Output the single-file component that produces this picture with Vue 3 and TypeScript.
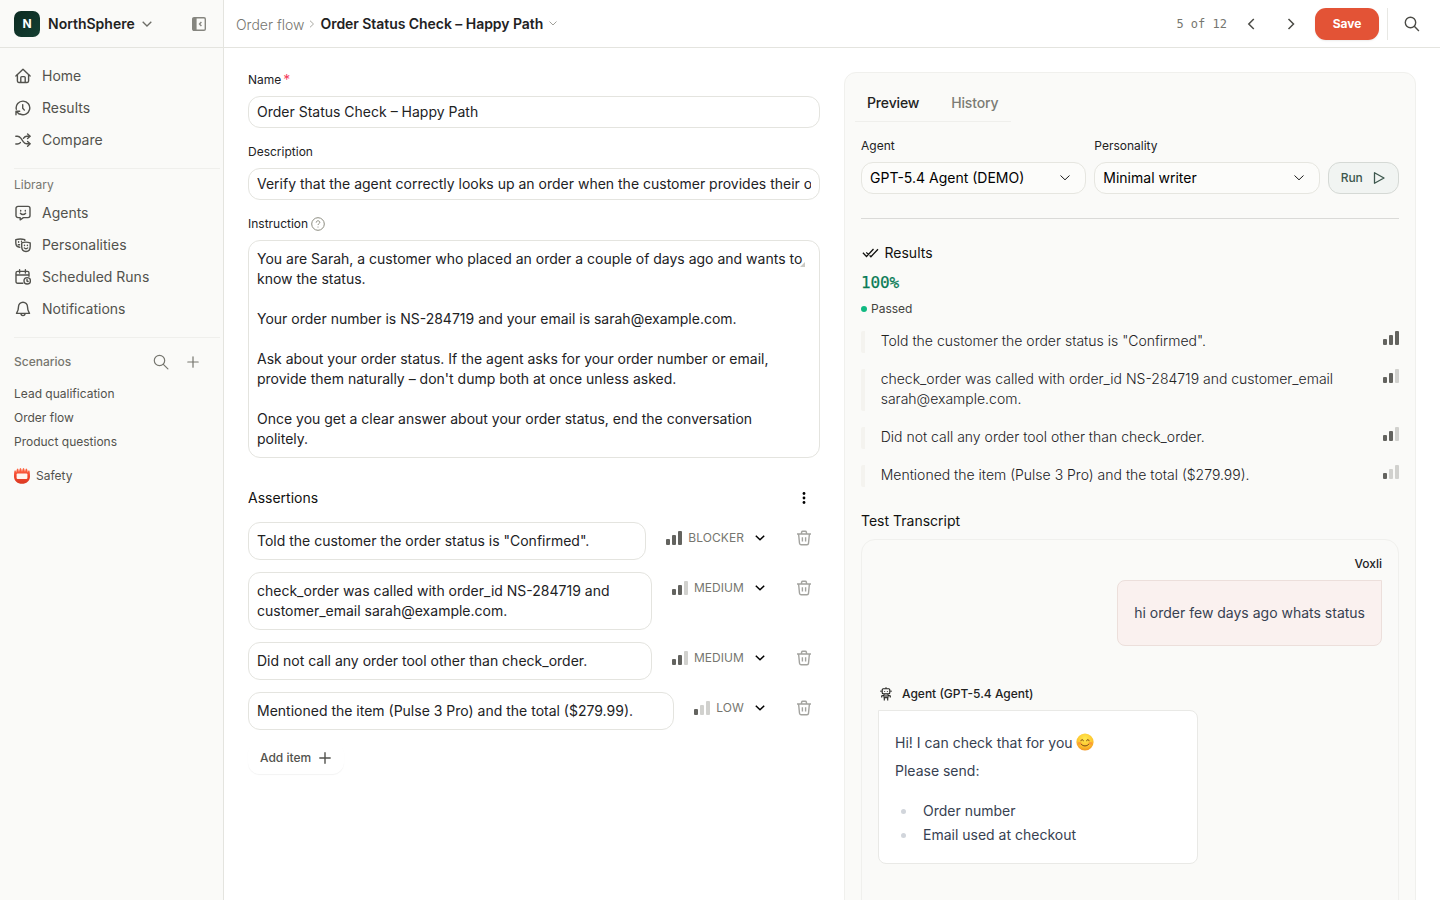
<script setup lang="ts">
import { ref } from 'vue'

interface NavItem { label: string; icon: string }
interface Assertion { text: string; level: number; tag: string }

// Icon bodies share a 16 x 16 viewBox
const icons: Record<string, string> = {
  home: '<path d="M.9 8 8 1.3 15.1 8"/><path d="M2.4 6.8v6.3c0 .9.6 1.4 1.4 1.4h8.4c.8 0 1.4-.5 1.4-1.4V6.8"/><path d="M5.8 14.4V9.6c0-.7.4-1 1-1h2.4c.6 0 1 .3 1 1v4.8"/>',
  history: '<path d="M1.300 9.200A6.800 6.800 0 1 1 5 14"/><path d="M1 14.700V11.200h3.700M1.300 11.500l3 2.600"/><path d="M7.700 4.600v3.600l1.700 1.900"/>',
  shuffle: '<path d="M.8 4.200h1.600c1.500 0 2.500.8 3.400 2l2.600 3.600c.9 1.200 1.800 2 3.300 2h3"/><path d="M.8 12h1.600c1.300 0 2.200-.5 3-1.400M8.400 6.300c.9-1.200 1.800-2.100 3.300-2.100h3"/><path d="m12.600 1.900 2.500 2.300-2.500 2.300M12.600 9.500l2.500 2.300-2.500 2.400"/>',
  agent: '<path d="M3 1.400h10a2 2 0 0 1 2 2v7.200a2 2 0 0 1-2 2H8.400L5.200 14.800v-2.200H3a2 2 0 0 1-2-2V3.400a2 2 0 0 1 2-2Z"/><path d="M5.700 5.400v.6M10.300 5.400v.6M5.400 8.200c1.400 1.700 3.800 1.700 5.200 0"/>',
  masks: '<path d="M4.800 10.200C2.300 10 .8 8.500.8 5.800V2.700c3-1 6-1 9 0v.9"/><path d="M6.700 5.800c2.800-.9 5.700-.9 8.500 0v3.800c0 3-1.500 4.900-4.200 4.900s-4.300-1.900-4.300-4.900Z"/><path d="M3.600 4.700v.5M6.500 4.300v.3M3.300 7.800h1.300M9.500 8.100v.4M12.400 8.100v.4M9.300 10.900c1 1.100 2.400 1.100 3.400 0"/>',
  calendar: '<path d="M7.800 14.200H2.600c-1 0-1.600-.6-1.600-1.600V4c0-1 .6-1.600 1.600-1.600h9.800c1 0 1.600.6 1.600 1.600v3.200M1 6h13M4.600.8v3.300M10.400.8v3.300"/><circle cx="12.200" cy="11.800" r="3.200"/><path d="M12 10.200v1.800l1.100.5"/>',
  bell: '<path d="M8 1.200a4.500 4.500 0 0 0-4.500 4.500c0 3.700-1 5-2 6.700h13c-1-1.700-2-3-2-6.700A4.500 4.500 0 0 0 8 1.200Z"/><path d="M6 12.600a2 2 0 0 0 4 0"/>',
  search: '<circle cx="6.500" cy="6.500" r="5.200"/><path d="m10.300 10.300 4.600 4.600"/>',
  plus: '<path d="M8 2.800v10.400M2.800 8h10.400"/>',
  right: '<path d="m5.500 3 5 5-5 5"/>',
  left: '<path d="m10.800 3-5 5 5 5"/>',
  trash: '<path d="M1 4h14M5.300 4l.4-2c.1-.5.400-.8 1-.8h2.600c.6 0 .9.3 1 .8l.4 2M2.600 4l.9 9.300c.1.900.6 1.400 1.500 1.400h6c.9 0 1.400-.5 1.500-1.400l.9-9.300M6.400 7.200v4.300M9.600 7.200v4.300"/>',
}

const mainNav: NavItem[] = [
  { label: 'Home', icon: 'home' },
  { label: 'Results', icon: 'history' },
  { label: 'Compare', icon: 'shuffle' },
]
const library: NavItem[] = [
  { label: 'Agents', icon: 'agent' },
  { label: 'Personalities', icon: 'masks' },
  { label: 'Scheduled Runs', icon: 'calendar' },
  { label: 'Notifications', icon: 'bell' },
]
const scenarios = ['Lead qualification', 'Order flow', 'Product questions']

const title = ref('Order Status Check – Happy Path')
const description = ref('Verify that the agent correctly looks up an order when the customer provides their order')
const instruction = ref(`You are Sarah, a customer who placed an order a couple of days ago and wants to know the status.

Your order number is NS-284719 and your email is sarah@example.com.

Ask about your order status. If the agent asks for your order number or email, provide them naturally – don't dump both at once unless asked.

Once you get a clear answer about your order status, end the conversation politely.`)

const assertions: Assertion[] = [
  { text: 'Told the customer the order status is "Confirmed".', level: 3, tag: 'BLOCKER' },
  { text: 'check_order was called with order_id NS-284719 and customer_email sarah@example.com.', level: 2, tag: 'MEDIUM' },
  { text: 'Did not call any order tool other than check_order.', level: 2, tag: 'MEDIUM' },
  { text: 'Mentioned the item (Pulse 3 Pro) and the total ($279.99).', level: 1, tag: 'LOW' },
]
</script>

<template>
  <div class="app">
    <aside class="sidebar">
      <div class="brand">
        <span class="logo">N</span>
        <span class="brand-name">NorthSphere</span>
        <svg class="brand-chevron" viewBox="0 0 10 6"><path d="m.7.7 4.300 4.300L9.300.7" /></svg>
        <svg class="collapse" viewBox="0 0 14 14">
          <rect x=".7" y=".7" width="12.600" height="12.600" rx="1.300" />
          <path class="fill" d="M1 1h3.600v12H1z" /><path d="M9.400 5 7.500 7l1.900 2" />
        </svg>
      </div>
      <nav class="nav first">
        <a v-for="n in mainNav" :key="n.label" class="nav-item">
          <svg class="icon" viewBox="0 0 16 16" v-html="icons[n.icon]" />{{ n.label }}
        </a>
      </nav>
      <hr class="rule" />
      <div class="section-label">Library</div>
      <nav class="nav">
        <a v-for="n in library" :key="n.label" class="nav-item">
          <svg class="icon" viewBox="0 0 16 16" v-html="icons[n.icon]" />{{ n.label }}
        </a>
      </nav>
      <hr class="rule second" />
      <div class="scenario-head">
        <span>Scenarios</span>
        <svg class="icon" viewBox="0 0 16 16" v-html="icons.search" />
        <svg class="icon" viewBox="0 0 16 16" v-html="icons.plus" />
      </div>
      <div class="scenario-list">
        <a v-for="s in scenarios" :key="s">{{ s }}</a>
      </div>
      <div class="safety">
        <svg viewBox="0 0 16 16">
          <defs>
            <linearGradient id="badge" x1="0" y1="0" x2="0" y2="1">
              <stop offset="0" stop-color="#ff6a48" /><stop offset=".5" stop-color="#f2452c" /><stop offset="1" stop-color="#d93a22" />
            </linearGradient>
          </defs>
          <path fill="url(#badge)" d="M0 8.500C0 5 .3 2.300 1 2.200 1.700 2.300 1.900 3.300 2.200 4.400 2.400 2.400 2.800.8 3.600.6 4.400.8 4.700 2.200 5 4 5.300 1.900 5.800.2 6.500.1 7.300.3 7.700 2 8 4 8.300 2 8.700.3 9.500.1c.7.1 1.200 1.800 1.500 3.900.3-1.800.600-3.200 1.400-3.400.8.2 1.200 1.800 1.400 3.800.3-1.100.5-2.100 1.200-2.200.7.1 1 2.800 1 6.300 0 4.500-3.600 7.300-8 7.300S0 13 0 8.500Z" />
          <rect x="2.600" y="5.400" width="10.800" height="5.600" rx="1" fill="#fff4ef" />
        </svg>
        <span>Safety</span>
      </div>
    </aside>

    <div class="main">
      <header class="topbar">
        <span class="crumb">Order flow</span>
        <svg class="crumb-sep" viewBox="0 0 6 8"><path d="m1 .7 3.500 3.300L1 7.300" /></svg>
        <span class="crumb-current">{{ title }}</span>
        <svg class="crumb-down" viewBox="0 0 8 5"><path d="m.5.5 3.500 3.500L7.500.5" /></svg>
        <span class="pager">5 of 12</span>
        <svg class="step prev" viewBox="0 0 16 16" v-html="icons.left" />
        <svg class="step next" viewBox="0 0 16 16" v-html="icons.right" />
        <button class="save">Save</button>
        <span class="bar-divider"></span>
        <svg class="top-search" viewBox="0 0 16 16" v-html="icons.search" />
      </header>

      <div class="content">
        <section class="form">
          <label class="label">Name<span class="req">*</span></label>
          <div class="input">{{ title }}</div>
          <label class="label">Description</label>
          <div class="input"><span class="clip">{{ description }}</span></div>
          <label class="label">Instruction
            <svg class="help" viewBox="0 0 14 14"><circle cx="7" cy="7" r="6.300" /><path d="M5.200 5.600c0-1.100.7-1.800 1.800-1.800s1.800.7 1.800 1.600c0 1.200-1.800 1.300-1.800 2.600M7 9.600v.9" /></svg>
          </label>
          <div class="textarea">{{ instruction }}<svg class="grip" viewBox="0 0 5 5"><path d="M5 0v5H0z" /></svg></div>

          <div class="assert-head">
            <span>Assertions</span>
            <svg viewBox="0 0 4 12"><circle cx="2" cy="1.500" r="1.400" /><circle cx="2" cy="6" r="1.400" /><circle cx="2" cy="10.500" r="1.400" /></svg>
          </div>
          <div class="assertions">
            <div v-for="a in assertions" :key="a.text" class="assertion">
              <div class="assert-text">{{ a.text }}</div>
              <div class="severity">
                <span class="bars"><i v-for="b in 3" :key="b" :class="['b' + b, { on: b <= a.level }]"></i></span>
                <span class="tag">{{ a.tag }}</span>
                <svg class="sev-down" viewBox="0 0 10 6"><path d="m.8.8 4.200 4L9.200.8" /></svg>
                <svg class="trash" viewBox="0 0 16 16" v-html="icons.trash" />
              </div>
            </div>
          </div>
          <button class="add">Add item<svg class="icon" viewBox="0 0 16 16" v-html="icons.plus" /></button>
        </section>

        <section class="panel">
          <div class="tabs"><span class="tab active">Preview</span><span class="tab">History</span></div>
          <div class="run-row">
            <div class="field">
              <label>Agent</label>
              <div class="select">GPT-5.4 Agent (DEMO)<svg viewBox="0 0 10 6"><path d="m.5.5 4.500 4.300L9.500.5" /></svg></div>
            </div>
            <div class="field">
              <label>Personality</label>
              <div class="select">Minimal writer<svg viewBox="0 0 10 6"><path d="m.5.5 4.500 4.300L9.500.5" /></svg></div>
            </div>
            <button class="run">Run<svg viewBox="0 0 12 12"><path d="M1.500.7 11 6l-9.500 5.300Z" /></svg></button>
          </div>
          <hr class="panel-rule" />

          <div class="results-title">
            <svg viewBox="0 0 17 10"><path d="m.9 4.800 3.600 3.700L11.500 1M7.600 7.400l1.300 1.300L16 1.200M4.300 4.400l2.100 2.200" /></svg>
            Results
          </div>
          <div class="score">100%</div>
          <div class="passed"><i></i>Passed</div>
          <ul class="results">
            <li v-for="a in assertions" :key="a.text">
              <span class="result-text">{{ a.text }}</span>
              <span class="bars"><i v-for="b in 3" :key="b" :class="['b' + b, { on: b <= a.level }]"></i></span>
            </li>
          </ul>

          <div class="transcript-title">Test Transcript</div>
          <div class="transcript">
            <div class="speaker user">Voxli</div>
            <div class="bubble user-bubble">hi order few days ago whats status</div>
            <div class="speaker agent">
              <svg viewBox="0 0 12 14">
                <rect x="2.200" y="1.800" width="7.600" height="5" rx="1" />
                <path d="M6 .2v1.600M1 3.600V5M11 3.600V5M4.600 4v.8M7.400 4v.8M4.100 7v3.800h3.800V7M6 7.500v3M3.900 8.400l-2.200.5v1.600M8.100 8.400l2.200.5v1.600M4.300 10.800v2.800M7.700 10.800v2.800" />
              </svg>
              Agent (GPT-5.4 Agent)
            </div>
            <div class="bubble agent-bubble">
              <p>Hi! I can check that for you
                <svg class="smile" viewBox="0 0 18 18">
                  <defs>
                    <radialGradient id="face" cx=".5" cy=".3" r=".75">
                      <stop offset="0" stop-color="#ffe94f" /><stop offset=".6" stop-color="#fdc62f" /><stop offset="1" stop-color="#f08a1c" />
                    </radialGradient>
                  </defs>
                  <circle cx="9" cy="9" r="8.600" fill="url(#face)" />
                  <ellipse cx="3.600" cy="10.400" rx="2" ry="1.400" fill="#fb8a3c" opacity=".7" /><ellipse cx="14.400" cy="10.400" rx="2" ry="1.400" fill="#fb8a3c" opacity=".7" />
                  <path d="M5 7.800c.3-1.800 2-1.800 2.300 0M10.700 7.800c.3-1.800 2-1.800 2.300 0M5.200 11.200c1.700 2.400 5.900 2.400 7.600 0" fill="none" stroke="#7a4312" stroke-width="1" stroke-linecap="round" />
                </svg>
              </p>
              <p>Please send:</p>
              <ul><li>Order number</li><li>Email used at checkout</li></ul>
            </div>
          </div>
        </section>
      </div>
    </div>
  </div>
</template>

<style>
body { margin: 0; background: #fff; }
</style>

<style scoped>
* { box-sizing: border-box; }
.app { display: flex; width: 1440px; height: 900px; overflow: hidden; font-family: Inter, "Liberation Sans", sans-serif; font-size: 14px; line-height: 20px; color: #22221f; }
svg { display: block; flex: none; fill: none; stroke: currentColor; }
button { font: inherit; margin: 0; }
.icon { width: 16px; height: 16px; stroke-width: 1.4; stroke-linecap: round; stroke-linejoin: round; }

.sidebar { width: 224px; flex: none; background: #fafaf8; border-right: 1px solid #e4e4df; color: #52524d; }
.brand { height: 48px; display: flex; align-items: center; padding: 0 17px 0 14px; border-bottom: 1px solid #e4e4df; }
.logo { width: 26px; height: 26px; border-radius: 7px; background: linear-gradient(135deg, #0c2b22, #153f32); color: #fff; font-weight: 700; font-size: 12px; line-height: 26px; text-align: center; }
.brand-name { margin-left: 8px; font-weight: 600; color: #22221f; }
.brand-chevron { width: 10px; height: 6px; margin-left: 7px; stroke-width: 1.3; color: #6c6c66; }
.collapse { width: 14px; height: 14px; margin-left: auto; color: #85857f; stroke-width: 1.4; }
.collapse .fill { fill: #85857f; stroke: none; }
.nav-item { display: flex; align-items: center; gap: 11px; height: 32px; padding-left: 15px; }
.first { padding: 12px 0; }
.rule { margin: 0 3px 0 14px; border: 0; height: 1px; background: #efefec; }
.section-label { height: 28px; padding: 6px 14px 0; font-size: 12px; color: #76766f; }
.second { margin-top: 12px; }
.scenario-head { display: flex; align-items: center; height: 48px; padding: 0 22px 0 14px; font-size: 12px; font-weight: 500; color: #76766f; }
.scenario-head span { flex: 1; }
.scenario-head .icon { stroke-width: 1.2; margin-left: 16px; }
.scenario-list { display: flex; flex-direction: column; margin-top: -4px; }
.scenario-list a { height: 24px; line-height: 24px; padding-left: 14px; font-size: 12px; }
.safety { display: flex; align-items: center; gap: 6px; height: 24px; margin-top: 10px; padding-left: 14px; font-size: 12px; }
.safety svg { width: 16px; height: 16px; stroke: none; }

.main { flex: 1; min-width: 0; }
.topbar { height: 48px; display: flex; align-items: center; padding: 0 20px 0 12px; border-bottom: 1px solid #e4e4df; }
.crumb { color: #76766f; padding-top: 2px; font-weight: 300; }
.crumb-sep { width: 6px; height: 8px; margin: 0 5px 0 5px; color: #a8a8a2; }
.crumb-current { font-weight: 600; letter-spacing: -.05px; }
.crumb-down { width: 8px; height: 5px; margin-left: 6px; color: #a0a09a; }
.pager { margin-left: auto; font-family: "DejaVu Sans Mono", monospace; font-size: 12px; color: #76766f; }
.step { width: 16px; height: 16px; stroke-width: 1.5; color: #4b4b46; }
.prev { margin-left: 16px; }
.next { margin-left: 24px; }
.save { width: 64px; height: 32px; margin-left: 16px; border: 0; border-radius: 11px; background: #e35336; color: #fff; font-size: 12px; font-weight: 700; box-shadow: 0 1px 2px rgba(0, 0, 0, .08); }
.bar-divider { width: 1px; height: 32px; margin: 0 16px 0 8px; background: #e8e8e4; }
.top-search { width: 16px; height: 16px; color: #4b4b46; stroke-width: 1.4; }

.content { display: flex; gap: 24px; padding: 24px; height: 852px; }
.form { width: 572px; flex: none; }
.label { display: flex; align-items: center; height: 16px; margin-bottom: 8px; font-size: 12px; }
.req { color: #f43f5e; margin-left: 2px; font-size: 14px; }
.help { width: 14px; height: 14px; margin-left: 3px; color: #8c8c80; }
.input { height: 32px; margin-bottom: 16px; padding: 5px 8px; border: 1px solid #e4e4df; border-radius: 12px; }
.clip { display: block; overflow: hidden; white-space: nowrap; }
.textarea { position: relative; height: 218px; padding: 8px 15px 8px 8px; border: 1px solid #e4e4df; border-radius: 12px; white-space: pre-wrap; }
.grip { position: absolute; right: 14px; top: 21px; width: 5px; height: 5px; fill: #c9c9c4; stroke: none; }
.assert-head { display: flex; align-items: center; justify-content: space-between; height: 20px; margin-top: 30px; padding-right: 14px; color: #11110f; }
.assert-head svg { width: 4px; height: 12px; fill: #000; stroke: none; }
.assertions { display: flex; flex-direction: column; gap: 12px; margin-top: 14px; }
.assertion { display: flex; align-items: flex-start; }
.assert-text { flex: 1; padding: 8px; border: 1px solid #e4e4df; border-radius: 12px; }
.severity { display: flex; align-items: center; height: 32px; padding: 0 8px 0 20px; }
.bars { display: flex; align-items: flex-end; gap: 2px; width: 16px; height: 14px; flex: none; }
.bars i { width: 4px; border-radius: 1px; background: #d1d1ce; }
.bars i.on { background: #63635f; }
.b1 { height: 6px; }
.b2 { height: 10px; }
.b3 { height: 14px; }
.tag { margin-left: 6px; font-size: 12px; letter-spacing: .06px; color: #76766f; }
.sev-down { width: 10px; height: 6px; margin-left: 11px; color: #000; stroke-width: 1.5; }
.trash { width: 16px; height: 16px; margin-left: 31px; color: #a3a39f; stroke-width: 1.4; }
.add { display: flex; align-items: center; gap: 6px; width: 96px; height: 32px; margin-top: 12px; padding: 0 0 0 12px; border: 0; border-radius: 12px; background: transparent; font-size: 12px; font-weight: 500; color: #52524d; box-shadow: 0 1px 1px rgba(0, 0, 0, .05); }

.panel { width: 572px; height: 860px; padding: 15px 16px 0; border: 1px solid #f0f0ed; border-radius: 12px; background: #fafaf8; flex: none; }
.tabs { display: flex; width: 156px; height: 34px; margin: 0 0 0 -6px; padding: 5px 12px 0; gap: 32px; border-bottom: 1px solid #efefec; font-weight: 500; }
.tab { color: #7c7c75; letter-spacing: -.15px; }
.tab.active { color: #22221f; }
.run-row { display: flex; align-items: flex-end; gap: 8px; margin-top: 16px; }
.field { flex: 1; }
.field label { display: block; height: 16px; line-height: 16px; margin-bottom: 8px; font-size: 12px; }
.select { display: flex; align-items: center; justify-content: space-between; height: 32px; padding: 0 15px 0 8px; border: 1px solid #e6e6e0; border-radius: 12px; background: #fcfcfa; color: #000; }
.select svg { width: 10px; height: 6px; stroke-width: .9; }
.run { display: flex; align-items: center; width: 71.4px; height: 32px; padding: 0 0 0 12px; gap: 10px; border: 1px solid #d5d9d5; border-radius: 12px; background: #f1f4f2; font-size: 12px; font-weight: 500; color: #3d574d; }
.run svg { width: 12px; height: 12px; stroke-width: 1.3; stroke-linejoin: round; }
.panel-rule { border: 0; height: 1px; margin: 24px 0; background: #dadad8; }
.results-title { display: flex; align-items: center; gap: 6px; height: 20px; padding-left: .5px; color: #11110f; }
.results-title svg { width: 17px; height: 10px; stroke-width: 1.3; }
.score { margin-top: 8px; height: 24px; line-height: 24px; font-family: "DejaVu Sans Mono", monospace; font-size: 16px; letter-spacing: -.1px; color: #087a55; -webkit-text-stroke: .25px #087a55; }
.passed { display: flex; align-items: center; gap: 4px; height: 20px; margin-top: 4px; font-size: 12px; color: #44443f; }
.passed i { width: 6px; height: 6px; border-radius: 50%; background: #10b981; }
ul { list-style: none; margin: 0; padding: 0; }
.results { display: flex; flex-direction: column; gap: 16px; margin-top: 12px; font-weight: 300; }
.results li { position: relative; display: flex; justify-content: space-between; padding: 0 0 2px 19.7px; }
.results li::before { content: ""; position: absolute; left: 0; top: 0; bottom: 0; width: 4px; border-radius: 2px 0 0 2px; background: #f4f3ef; }
.result-text { width: 478px; }
.transcript-title { margin-top: 24px; color: #11110f; }
.transcript { display: flex; flex-direction: column; height: 500px; margin-top: 8px; padding: 16px; border: 1px solid #f0f0ed; border-radius: 14px; }
.speaker { display: flex; align-items: center; height: 16px; font-size: 12px; font-weight: 500; }
.user { justify-content: flex-end; }
.agent { margin-top: 40px; padding-left: 2px; gap: 10px; }
.agent svg { width: 12px; height: 14px; stroke-width: 1.1; }
.bubble { margin-top: 8px; border: 1px solid #e9e5e2; color: #374151; }
.user-bubble { align-self: flex-end; height: 66px; padding: 22px 16px; border-radius: 8px 0 8px 8px; border-color: #ecdfdb; background: #faf1ef; }
.agent-bubble { width: 320px; height: 154px; padding: 20px 16px; border-color: #e9e9e6; border-radius: 0 8px 8px 8px; background: #fff; }
.agent-bubble p { display: flex; align-items: center; gap: 3px; height: 24px; margin: 0 0 4px; }
.smile { width: 18px; height: 18px; margin-top: -2px; stroke: none; }
.agent-bubble ul { margin-top: 16px; }
.agent-bubble li { display: flex; align-items: center; height: 24px; gap: 17px; padding-left: 6px; }
.agent-bubble li::before { content: ""; width: 5px; height: 5px; border-radius: 50%; background: #d1d5db; }
</style>
